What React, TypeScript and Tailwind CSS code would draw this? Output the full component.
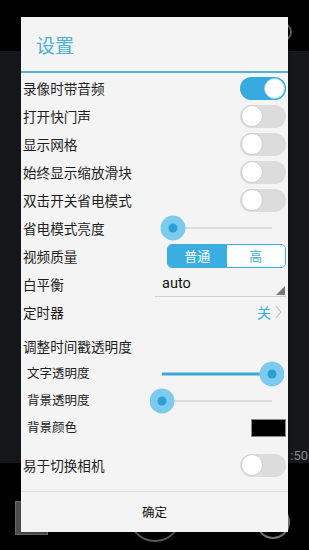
import React from "react";

const font = { fontFamily: '"Noto Sans CJK SC", "Noto Sans", sans-serif' };

function Switch({ on }: { on?: boolean }) {
    if (on)
        return (
            <div className="w-[46px] h-[23px] rounded-full bg-[#36a9df] flex items-center justify-end pr-[1px]">
                <div className="w-[21px] h-[21px] rounded-full bg-white border border-[#9fd3ec]" />
            </div>
        );
    return (
        <div className="w-[46px] h-[23px] rounded-full bg-[#dcdcdc] flex items-center pl-[1px]">
            <div className="w-[22px] h-[22px] rounded-full bg-white border border-[#cfcfcf]" />
        </div>
    );
}

// track runs 12..122 inside a 134px box
function Slider({ value }: { value: number }) {
    const cx = 12 + value * 110;
    return (
        <svg width="134" height="26" viewBox="0 0 134 26" className="flex-none mr-[2px]">
            <line x1="12" y1="13" x2="122" y2="13" stroke="#dddddd" strokeWidth="2" />
            <line x1="12" y1="13" x2={cx} y2="13" stroke="#3aa8d8" strokeWidth="3" />
            <circle cx={cx} cy="13" r="12.5" fill="#7ccbee" />
            <circle cx={cx} cy="13" r="4.5" fill="#2b9fd6" />
        </svg>
    );
}

function Row({ label, sub, children }: { label: string; sub?: boolean; children?: React.ReactNode }) {
    return (
        <div className={`flex items-center justify-between pr-[2px] ${sub ? "h-[27px] pl-[6px]" : "h-[28px] pl-[2px]"}`}>
            <span className={sub ? "text-[12.5px] text-[#222] whitespace-nowrap" : "text-[13.6px] text-[#1e1e1e] whitespace-nowrap"}>{label}</span>
            {children}
        </div>
    );
}

export default function App() {
    return (
        <div className="relative w-[309px] h-[550px] overflow-hidden bg-black" style={font}>
            {/* camera screen behind */}
            <div className="flex flex-col h-full">
                <div className="h-[51px] bg-black" />
                <div className="h-[412px] bg-[#15171a] flex justify-end items-end pb-[1px] pr-[1px]">
                    <span className="text-[13px] text-[#8a8a8a] leading-none" style={{ fontFamily: '"Roboto", sans-serif' }}>:50</span>
                </div>
                <div className="flex-1 bg-black flex items-start pt-[38px] pl-[15px]">
                    <div className="w-[33px] h-[34px] bg-[#4e4e4e] border border-[#6a6a6a]" />
                </div>
            </div>
            <div className="absolute left-[128px] top-[488px] w-[54px] h-[54px] rounded-full border-2 border-[#5a5a5a]" />
            <div className="absolute left-[256px] top-[505px] w-[34px] h-[34px] rounded-full border-2 border-[#777]" />
            <div className="absolute left-[272px] top-[22px] w-[20px] h-[20px] rounded-full border-2 border-[#5a5a5a]" />

            {/* dialog */}
            <div className="absolute left-[21px] top-[17px] w-[267px] h-[515px] bg-[#f4f4f4] flex flex-col shadow-md">
                <div className="h-[54px] flex items-center pl-[15px] pt-[2px]">
                    <span className="text-[19px] text-[#4cb0d6]">设置</span>
                </div>
                <div className="h-[2px] bg-[#5aafcb]" />
                <div className="flex flex-col pt-[1px]">
                    <Row label="录像时带音频"><Switch on /></Row>
                    <Row label="打开快门声"><Switch /></Row>
                    <Row label="显示网格"><Switch /></Row>
                    <Row label="始终显示缩放滑块"><Switch /></Row>
                    <Row label="双击开关省电模式"><Switch /></Row>
                    <Row label="省电模式亮度"><Slider value={0.1} /></Row>
                    <Row label="视频质量">
                        <div className="flex w-[119px] h-[24px] rounded-[5px] border border-[#3aaee0] overflow-hidden text-[13px]">
                            <div className="flex-1 bg-[#3aaee0] text-white flex items-center justify-center">普通</div>
                            <div className="flex-1 bg-white text-[#3aaee0] flex items-center justify-center">高</div>
                        </div>
                    </Row>
                    <Row label="白平衡">
                        <div className="relative w-[131px] h-[26px] border-b border-[#cfcfcf] flex items-center pl-[7px]">
                            <span className="text-[14.5px] text-[#111]" style={{ fontFamily: '"Roboto", sans-serif' }}>auto</span>
                            <div className="absolute right-[1px] bottom-[1px] w-0 h-0 border-l-[9px] border-l-transparent border-b-[9px] border-b-[#777]" />
                        </div>
                    </Row>
                    <Row label="定时器">
                        <div className="flex items-center gap-[4px] pr-[4px]">
                            <span className="text-[14px] text-[#3aaee0]">关</span>
                            <svg width="7" height="14" viewBox="0 0 7 14">
                                <path d="M1 1 L6 7 L1 13" fill="none" stroke="#c8c8c8" strokeWidth="1.2" />
                            </svg>
                        </div>
                    </Row>
                    <div className="mt-[6px]">
                        <Row label="调整时间戳透明度" />
                    </div>
                    <Row label="文字透明度" sub><Slider value={1} /></Row>
                    <Row label="背景透明度" sub><Slider value={0} /></Row>
                    <Row label="背景颜色" sub>
                        <div className="w-[35px] h-[18px] bg-black border border-[#888]" />
                    </Row>
                    <div className="mt-[10px]">
                        <Row label="易于切换相机"><Switch /></Row>
                    </div>
                </div>
                <div className="mt-auto h-px bg-[#dcdcdc]" />
                <div className="h-[40px] flex items-center justify-center">
                    <span className="text-[12.5px] text-[#111]">确定</span>
                </div>
            </div>
        </div>
    );
}
